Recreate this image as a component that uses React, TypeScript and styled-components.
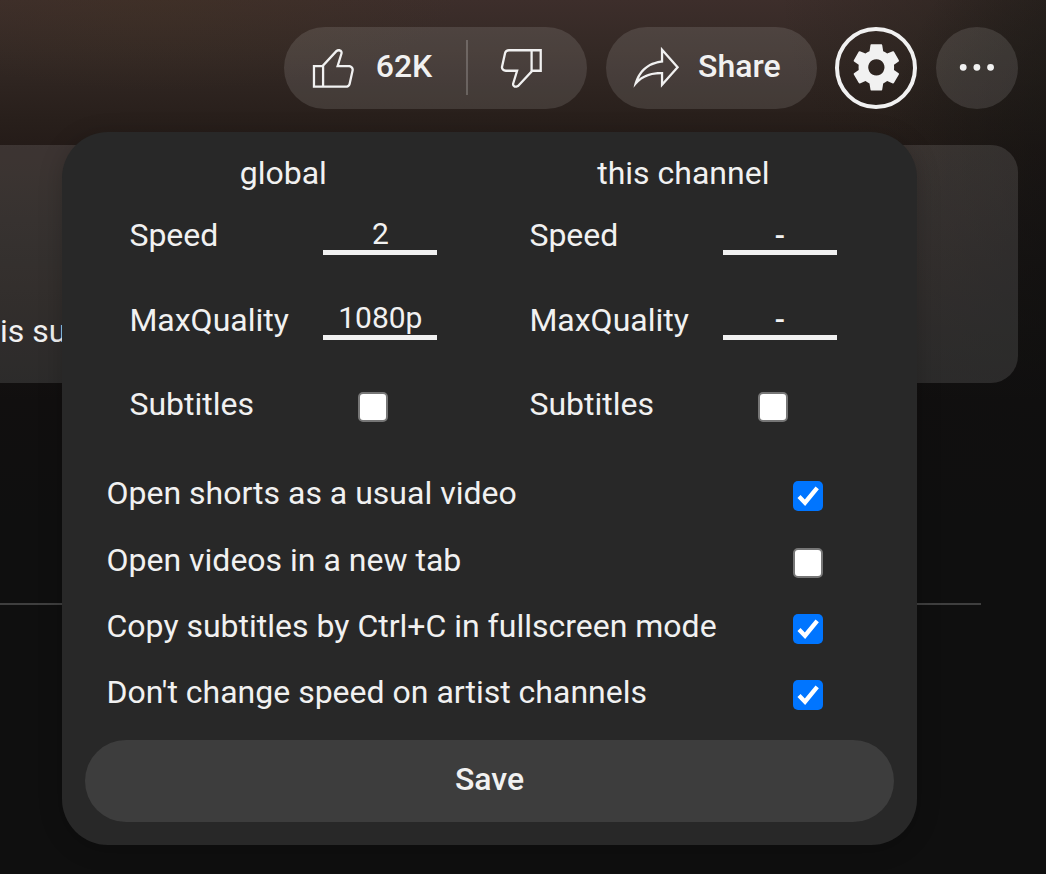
import React, { useState } from "react";
import styled, { createGlobalStyle } from "styled-components";

const GlobalStyle = createGlobalStyle`
  * { box-sizing: border-box; }
  body {
    margin: 0;
    background: #0f0f0f;
    color: #f1f1f1;
    font-family: Roboto, "Liberation Sans", sans-serif;
    font-size: 32px;
  }
  button, input { font: inherit; color: inherit; }
`;

const Page = styled.main`
  position: relative;
  width: 1046px;
  height: 874px;
  overflow: hidden;
  background:
    radial-gradient(ellipse 240px 420px at 1100px 300px, rgba(15, 15, 15, 0.75) 0, rgba(15, 15, 15, 0.5) 40%, transparent 100%),
    radial-gradient(ellipse 300px 260px at 1080px 0, rgba(30, 28, 22, 0.6) 0, transparent 100%),
    radial-gradient(ellipse 300px 90px at 160px 0, rgba(66, 50, 34, 0.4), transparent),
    linear-gradient(#3d2e2b 0, #342925 50px, #281f1b 120px, #241b18 150px, #1e1816 220px, #161311 330px, #110f0f 400px, #0f0f0f 520px);
`;

const Toolbar = styled.div`
  display: flex;
  justify-content: flex-end;
  padding: 26.5px 28px 0 0;
  height: 145px;
  gap: 18.7px;
`;

const Pill = styled.div`
  display: flex;
  align-items: center;
  height: 82px;
  border-radius: 41px;
  background: rgba(255, 255, 255, 0.115);
`;

const PillButton = styled.button<{ $pad: string }>`
  display: flex;
  align-items: center;
  height: 82px;
  padding: ${(p) => p.$pad};
  gap: 15.5px;
  border: 0;
  background: none;
  font-weight: 500;
`;

const PillLabel = styled.span`
  position: relative;
  top: -2px;
`;

const Separator = styled.span`
  width: 2px;
  height: 55px;
  background: rgba(255, 255, 255, 0.2);
`;

const RoundButton = styled.button<{ $outlined?: boolean }>`
  display: grid;
  place-items: center;
  width: 82px;
  height: 82px;
  padding: 0;
  border-radius: 50%;
  border: ${(p) => (p.$outlined ? "4.6px solid #f1f1f1" : "0")};
  background: ${(p) => (p.$outlined ? "transparent" : "rgba(255, 255, 255, 0.115)")};
`;

const Icon = styled.svg`
  width: 54.7px;
  height: 54.7px;
  flex: none;
  fill: #f1f1f1;
`;

const Description = styled.section`
  width: 1018px;
  height: 238px;
  padding: 167px 0 0 0;
  border-radius: 0 27px 27px 0;
  background: rgba(255, 255, 255, 0.115);
  line-height: 38px;
`;

const Divider = styled.hr`
  width: 981px;
  height: 2px;
  margin: 220px 0 0;
  border: 0;
  background: #3f3f3f;
`;

const Panel = styled.form`
  position: absolute;
  left: 62px;
  top: 132px;
  width: 855px;
  height: 713px;
  padding: 22px 23px;
  border-radius: 46px;
  background: #282828;
  box-shadow: 0 4px 24px rgba(0, 0, 0, 0.2);
`;

const Columns = styled.div`
  display: grid;
  grid-template-columns: 400px 400px;
  height: 304px;
`;

const Column = styled.section`
  display: flex;
  flex-direction: column;
`;

const Heading = styled.h2`
  margin: 0 0 11px;
  padding-right: 3.4px;
  font-size: 32px;
  font-weight: 400;
  line-height: 38px;
  text-align: center;
`;

const Field = styled.label`
  display: flex;
  align-items: center;
  height: 84.5px;
  padding-left: 44.4px;
  line-height: 38px;
`;

const FieldName = styled.span`
  width: 193.2px;
  margin-top: -20px;
`;

const ValueInput = styled.input<{ $unset: boolean }>`
  width: 114.5px;
  height: 40px;
  margin: -20px 0 0;
  padding: ${(p) => (p.$unset ? "5px 0 0" : "1px 0 0 1px")};
  border: 0;
  border-bottom: 5px solid #f1f1f1;
  border-radius: 0;
  outline: 0;
  background: transparent;
  font-size: 30px;
  font-weight: ${(p) => (p.$unset ? 500 : 400)};
  text-align: center;
`;

const CheckCell = styled.span`
  display: flex;
  margin: -14px 0 0 35.5px;
`;

const Options = styled.div`
  display: flex;
  flex-direction: column;
  height: 282px;
`;

const Option = styled.label`
  display: flex;
  align-items: flex-start;
  justify-content: space-between;
  height: 66.3px;
  padding: 16.3px 71.4px 0 21.5px;
  line-height: 38px;
`;

const Box = styled.input`
  appearance: none;
  display: block;
  width: 30px;
  height: 30px;
  margin: 0;
  border: 2px solid #767676;
  border-radius: 5px;
  background: #fff;
  &:checked { border: 0; background: #0075ff; }
`;

const BoxFrame = styled.span`
  display: grid;
  width: 30px;
  height: 30px;
  > * { grid-area: 1 / 1; }
`;

const Tick = styled.svg`
  z-index: 1;
  width: 30px;
  height: 30px;
  fill: none;
  stroke: #fff;
  stroke-width: 4.3;
  pointer-events: none;
`;

const OptionCheck = styled.span`
  margin-top: 7px;
`;

const Save = styled.button`
  display: block;
  width: 100%;
  height: 82px;
  padding: 0 0 5px;
  border: 0;
  border-radius: 41px;
  background: #3d3d3d;
  font-weight: 500;
`;

function Checkbox({ initial = false }: { initial?: boolean }) {
  const [checked, setChecked] = useState(initial);
  return (
    <BoxFrame>
      <Box type="checkbox" checked={checked} onChange={() => setChecked(!checked)} />
      {checked && (
        <Tick viewBox="0 0 30 30">
          <path d="M6 15.6 L12 21.7 L24.2 6.8" />
        </Tick>
      )}
    </BoxFrame>
  );
}

function Settings({ title, speed, quality }: { title: string; speed: string; quality: string }) {
  return (
    <Column>
      <Heading>{title}</Heading>
      <Field>
        <FieldName>Speed</FieldName>
        <ValueInput $unset={speed === "-"} defaultValue={speed} />
      </Field>
      <Field>
        <FieldName>MaxQuality</FieldName>
        <ValueInput $unset={quality === "-"} defaultValue={quality} />
      </Field>
      <Field>
        <FieldName>Subtitles</FieldName>
        <CheckCell>
          <Checkbox />
        </CheckCell>
      </Field>
    </Column>
  );
}

const options = [
  { label: "Open shorts as a usual video", on: true },
  { label: "Open videos in a new tab", on: false },
  { label: "Copy subtitles by Ctrl+C in fullscreen mode", on: true },
  { label: "Don't change speed on artist channels", on: true },
];

export default function App() {
  return (
    <>
      <GlobalStyle />
      <Page>
        <Toolbar>
          <Pill>
            <PillButton $pad="0 34px 0 22px">
              <Icon viewBox="0 0 24 24">
                <path d="M18.77,11h-4.23l1.52-4.94C16.38,5.03,15.54,4,14.38,4c-0.58,0-1.14,0.24-1.52,0.65L7,11H3v10h4h1h9.43c1.06,0,1.98-0.67,2.19-1.61l1.34-6C21.23,12.15,20.18,11,18.77,11z M7,20H4v-8h3V20z M19.98,13.17l-1.34,6C18.54,19.65,18.03,20,17.43,20H8v-8.61l5.6-6.06C13.79,5.12,14.08,5,14.38,5c0.26,0,0.5,0.11,0.63,0.3c0.07,0.1,0.15,0.26,0.09,0.47l-1.52,4.94L13.18,12h1.35h4.23c0.41,0,0.8,0.17,1.03,0.46C19.92,12.61,20.05,12.86,19.98,13.17z" />
              </Icon>
              <PillLabel>62K</PillLabel>
            </PillButton>
            <Separator />
            <PillButton $pad="0 39px 0 25.3px">
              <Icon viewBox="0 0 24 24">
                <path d="M17,4h-1H6.57C5.5,4,4.59,4.67,4.38,5.61l-1.34,6C2.77,12.85,3.82,14,5.23,14h4.23l-1.52,4.94C7.62,19.97,8.46,21,9.62,21c0.58,0,1.14-0.24,1.52-0.65L17,14h4V4H17z M10.4,19.67C10.21,19.88,9.92,20,9.62,20c-0.26,0-0.5-0.11-0.63-0.3c-0.07-0.1-0.15-0.26-0.09-0.47l1.52-4.94l0.4-1.29H9.46H5.23c-0.41,0-0.8-0.17-1.03-0.46c-0.12-0.15-0.25-0.4-0.18-0.72l1.34-6C5.46,5.35,5.97,5,6.57,5H16v8.61L10.4,19.67z M20,13h-3V5h3V13z" />
              </Icon>
            </PillButton>
          </Pill>
          <Pill>
            <PillButton $pad="0 36px 0 22.9px">
              <Icon viewBox="0 0 24 24">
                <path d="M15,5.63L20.66,12L15,18.37V15v-1h-1c-3.96,0-7.14,1-9.75,3.09c1.84-4.07,5.11-6.4,9.89-7.1L15,9.86V9V5.63 M14,3v6C6.22,10.13,3.11,15.33,2,21c2.78-3.97,6.44-6,12-6v6l8-9L14,3L14,3z" />
              </Icon>
              <PillLabel style={{ marginLeft: -1 }}>Share</PillLabel>
            </PillButton>
          </Pill>
          <RoundButton $outlined>
            <Icon viewBox="0 0 54.7 54.7">
              <path
                fillRule="evenodd"
                d="M22.2 4.2 H32.5 Q33.1 4.2 33.2 4.9 L34.2 11.2 Q36.4 12.2 38.2 13.6 L43.8 11.2 Q44.5 11 44.9 11.6 L49.9 20.3 Q50.2 21 49.7 21.4 L45 24.8 Q45.3 27.35 45 29.9 L49.7 33.3 Q50.2 33.7 49.9 34.4 L44.9 43.1 Q44.5 43.7 43.8 43.5 L38.2 41.1 Q36.4 42.5 34.2 43.5 L33.2 49.8 Q33.1 50.5 32.5 50.5 H22.2 Q21.6 50.5 21.5 49.8 L20.5 43.5 Q18.3 42.5 16.5 41.1 L10.9 43.5 Q10.2 43.7 9.8 43.1 L4.8 34.4 Q4.5 33.7 5 33.3 L9.7 29.9 Q9.4 27.35 9.7 24.8 L5 21.4 Q4.5 21 4.8 20.3 L9.8 11.6 Q10.2 11 10.9 11.2 L16.5 13.6 Q18.3 12.2 20.5 11.2 L21.5 4.9 Q21.6 4.2 22.2 4.2 Z M27.35 19.2 a8.15 8.15 0 1 0 0.01 0 Z"
              />
            </Icon>
          </RoundButton>
          <RoundButton>
            <Icon viewBox="0 0 24 24">
              <path d="M7.3 12a1.5 1.5 0 1 1-3 0 1.5 1.5 0 0 1 3 0zM13.3 12a1.5 1.5 0 1 1-3 0 1.5 1.5 0 0 1 3 0zM19.3 12a1.5 1.5 0 1 1-3 0 1.5 1.5 0 0 1 3 0z" />
            </Icon>
          </RoundButton>
        </Toolbar>
        <Description>is su</Description>
        <Divider />
        <Panel onSubmit={(e) => e.preventDefault()}>
          <Columns>
            <Settings title="global" speed="2" quality="1080p" />
            <Settings title="this channel" speed="-" quality="-" />
          </Columns>
          <Options>
            {options.map((o) => (
              <Option key={o.label}>
                {o.label}
                <OptionCheck>
                  <Checkbox initial={o.on} />
                </OptionCheck>
              </Option>
            ))}
          </Options>
          <Save type="submit">Save</Save>
        </Panel>
      </Page>
    </>
  );
}
